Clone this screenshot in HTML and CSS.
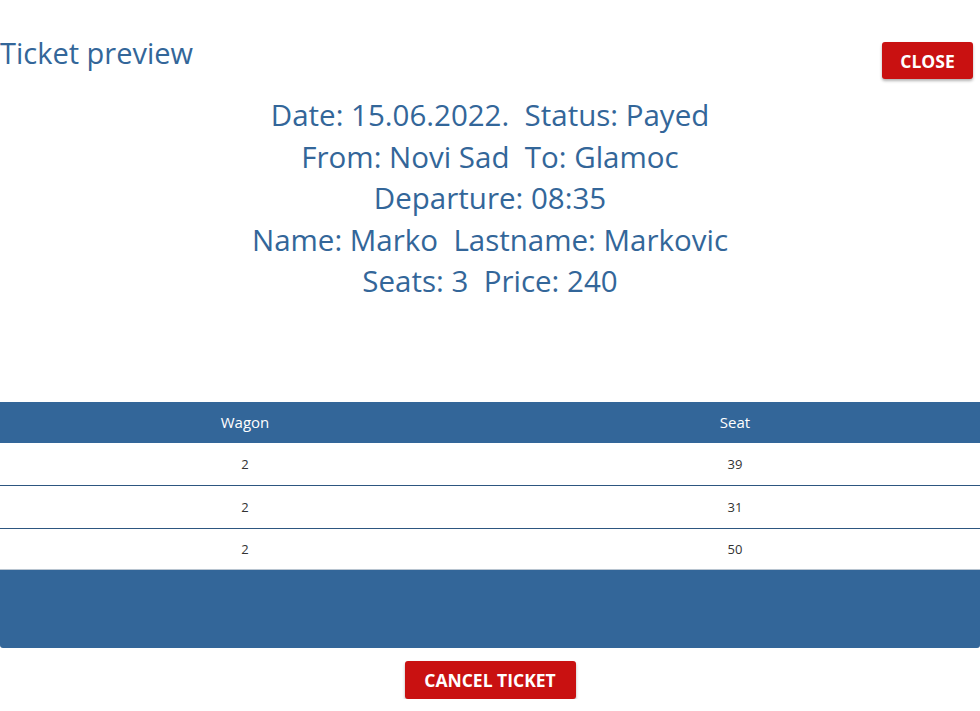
FILE: index.html
```html
<!DOCTYPE html>
<html>
<head>
<meta charset="utf-8">
<link rel="stylesheet" href="styles.css">
</head>
<body>
<div class="page">
  <div class="top">
    <h2 class="title">Ticket preview</h2>
    <button class="btn close">CLOSE</button>
  </div>
  <div class="details">
    <div>Date: 15.06.2022.&nbsp; Status: Payed</div>
    <div>From: Novi Sad&nbsp; To: Glamoc</div>
    <div>Departure: 08:35</div>
    <div>Name: Marko&nbsp; Lastname: Markovic</div>
    <div>Seats: 3&nbsp; Price: 240</div>
  </div>
  <div class="table-wrap">
    <table class="seats">
      <thead>
        <tr><th>Wagon</th><th>Seat</th></tr>
      </thead>
      <tbody>
        <tr><td>2</td><td>39</td></tr>
        <tr><td>2</td><td>31</td></tr>
        <tr><td>2</td><td>50</td></tr>
      </tbody>
    </table>
    <div class="table-foot"></div>
  </div>
  <div class="actions">
    <button class="btn cancel">CANCEL TICKET</button>
  </div>
</div>
</body>
</html>
```

FILE: styles.css
```css
html, body {
  margin: 0;
  padding: 0;
  background: #fff;
}
body {
  font-family: "Open Sans", "Noto Sans", sans-serif;
  color: #336699;
}
.page {
  width: 980px;
}
.top {
  display: flex;
  justify-content: space-between;
  align-items: flex-start;
  padding-top: 34px;
}
.title {
  margin: 0;
  font-weight: 400;
  font-size: 29px;
  line-height: 38px;
  color: #336699;
}
.btn {
  background: #c91111;
  color: #fff;
  border: none;
  border-radius: 3px;
  font-family: "Open Sans", sans-serif;
  font-weight: 700;
  box-shadow: 0 2px 3px rgba(0,0,0,0.3);
  cursor: pointer;
  padding: 0;
}
.close {
  margin-top: 8px;
  margin-right: 7px;
  width: 91px;
  height: 37px;
  font-size: 17.5px;
}
.details {
  text-align: center;
  font-size: 29.5px;
  line-height: 41.5px;
  margin-top: 15px;
}
.table-wrap {
  margin-top: 100px;
}
.seats {
  width: 100%;
  border-collapse: collapse;
  table-layout: fixed;
}
.seats th {
  background: #336699;
  color: #fff;
  font-weight: 400;
  font-size: 15px;
  height: 41px;
  padding: 0;
}
.seats td {
  text-align: center;
  color: #333;
  font-size: 13px;
  height: 42px;
  padding: 0;
}
.seats tbody tr:last-child td {
  height: 40px;
}
.seats tbody tr + tr td {
  border-top: 1px solid #2d5680;
}
.table-foot {
  background: #336699;
  height: 78px;
  border-top: 1px solid #b8c4d0;
  border-radius: 0 0 3px 3px;
}
.actions {
  display: flex;
  justify-content: center;
  padding-top: 13px;
}
.cancel {
  width: 171px;
  height: 38px;
  font-size: 17.5px;
}
```
